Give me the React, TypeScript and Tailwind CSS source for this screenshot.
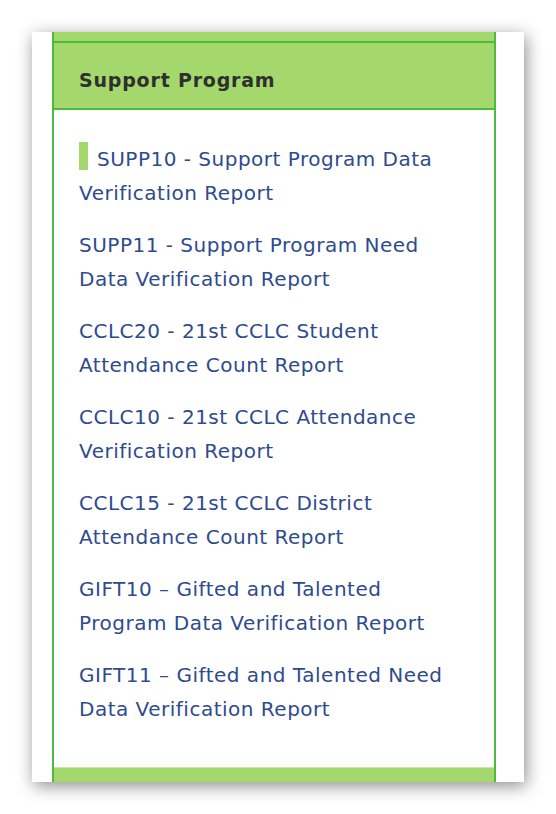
import * as React from "react";

const reports = [
  "SUPP10 - Support Program Data Verification Report",
  "SUPP11 - Support Program Need Data Verification Report",
  "CCLC20 - 21st CCLC Student Attendance Count Report",
  "CCLC10 - 21st CCLC Attendance Verification Report",
  "CCLC15 - 21st CCLC District Attendance Count Report",
  "GIFT10 – Gifted and Talented Program Data Verification Report",
  "GIFT11 – Gifted and Talented Need Data Verification Report",
];

export default function App() {
  return (
    <div className="w-[556px] h-[814px] bg-white p-[32px]">
      <div className="w-[492px] h-[750px] bg-white overflow-hidden pl-[20px] pr-[28px] shadow-[2px_4px_16px_rgba(0,0,0,0.45)]">
        <div className="h-full flex flex-col border-x-2 border-[#4dbb3e]">
          <div className="h-[11px] shrink-0 bg-[#a4d86c] border-b-2 border-[#4dbb3e]" />
          <div className="h-[67px] shrink-0 bg-[#a4d86c] border-b-2 border-[#4dbb3e] flex items-center pl-[25px] pt-[9px]">
            <h2 className="font-['DejaVu_Sans',sans-serif] font-bold text-[19px] tracking-[0.8px] text-[#2f2f2f]">
              Support Program
            </h2>
          </div>
          <ul className="flex-1 flex flex-col gap-[18px] pl-[25px] pr-[34px] pt-[32px] font-['DejaVu_Sans',sans-serif] text-[20px] leading-[34px] tracking-[0.5px] text-[#2e4b8e]">
            {reports.map((r, i) => (
              <li key={i}>
                {i === 0 && (
                  <span className="inline-block align-top w-[9px] h-[28px] bg-[#a4d86c] mr-[9px]" />
                )}
                <a href="#">{r}</a>
              </li>
            ))}
          </ul>
          <div className="h-[15px] shrink-0 bg-[#a4d86c] border-t border-[#c8e8a4]" />
        </div>
      </div>
    </div>
  );
}
